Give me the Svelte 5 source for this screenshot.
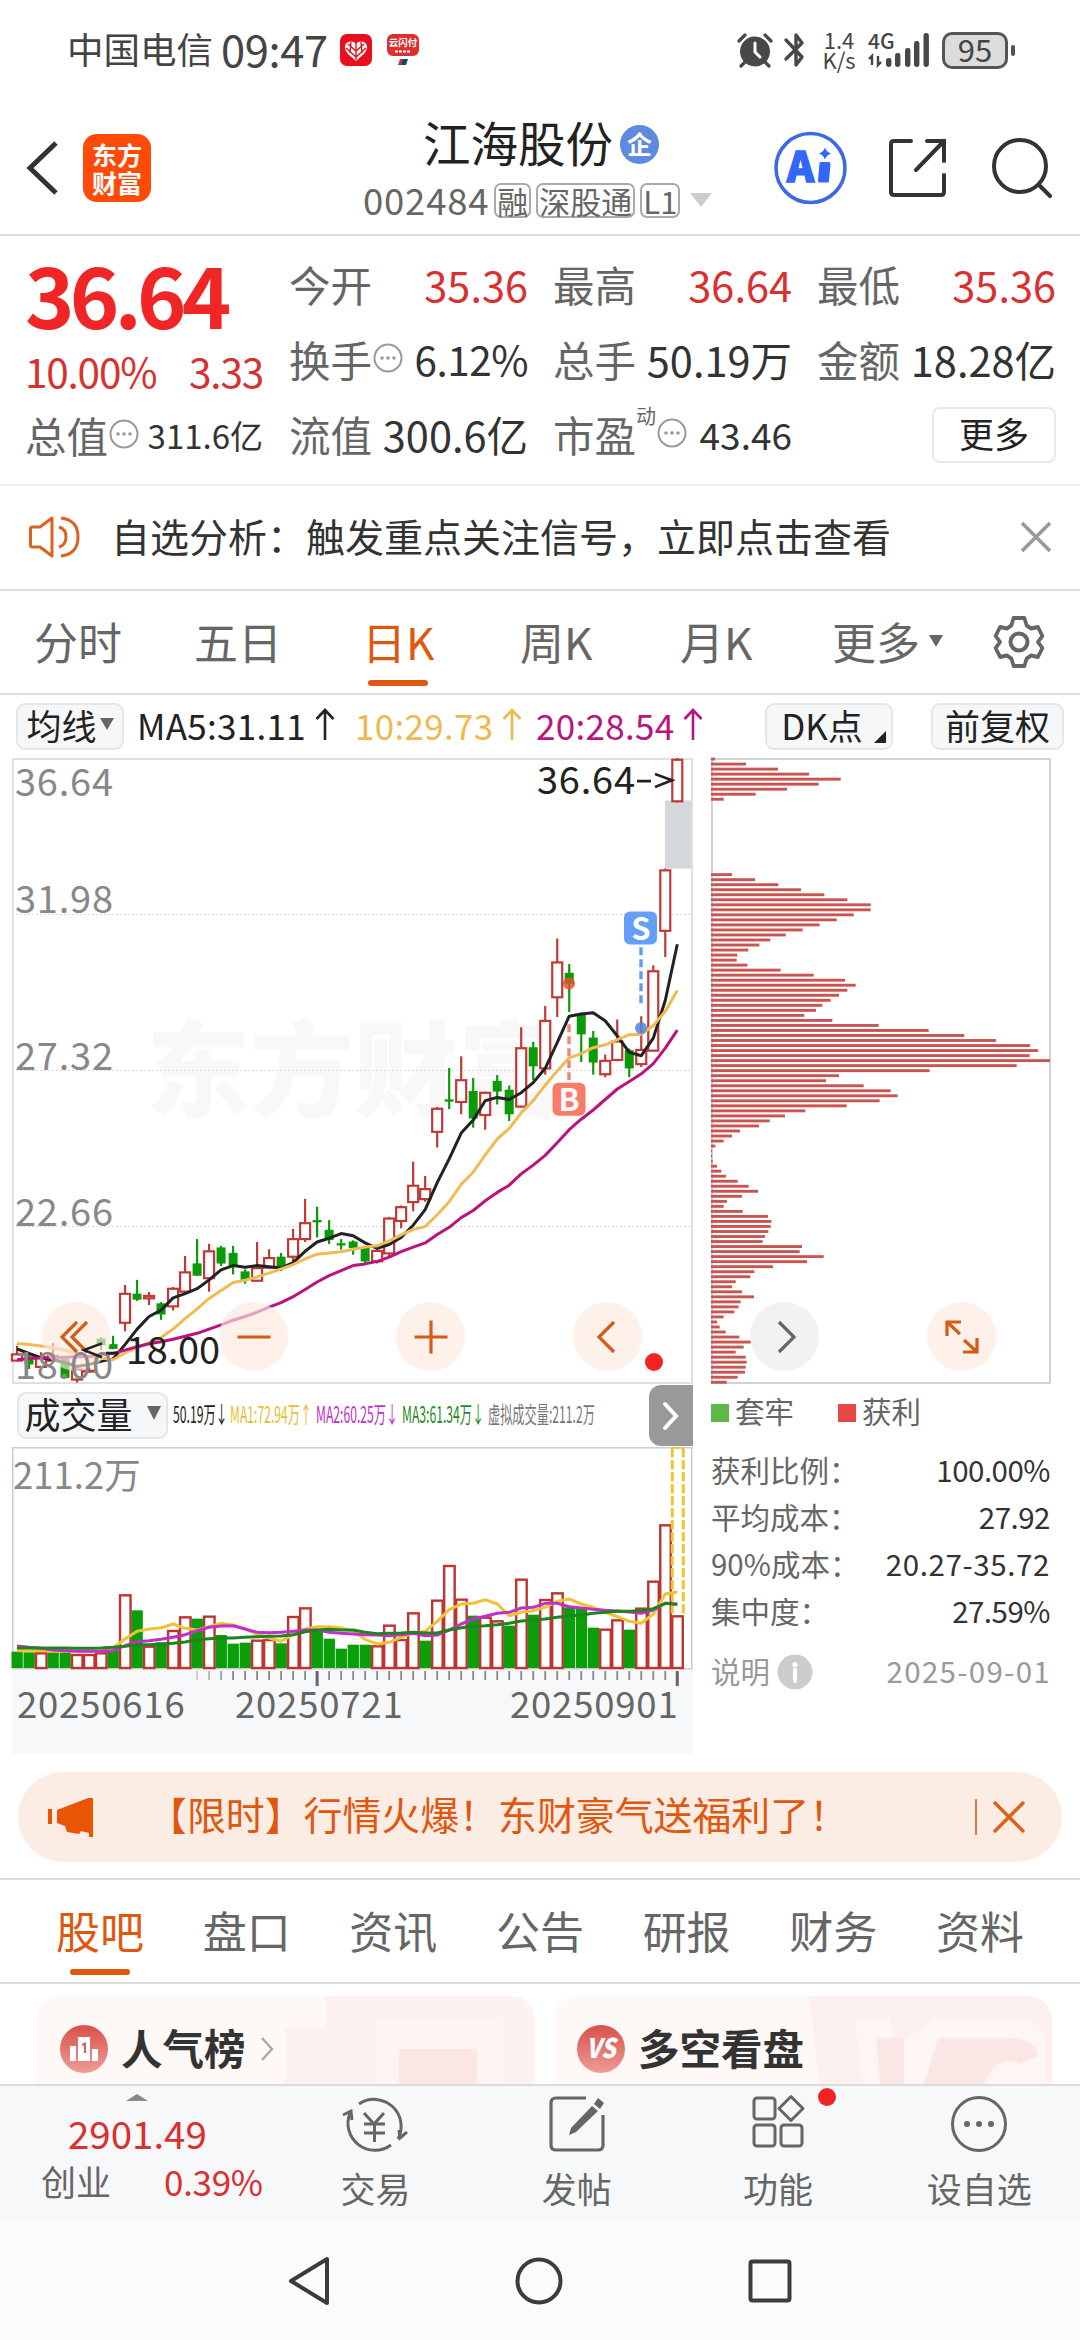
<script lang="ts">
  interface Candle {
    up: boolean;
    top: number;
    bottom: number;
    high: number;
    low: number;
  }

  const STEP = 12.005;
  const FIRST = 5;

  // direction, body top, body bottom, high, low
  const rawCandles: [number, number, number, number, number][] = [
    [1, 1459, 1475, 1440, 1475], [0, 1466, 1483, 1460, 1495], [1, 1466, 1490, 1455, 1495],
    [1, 1462, 1475, 1433, 1480], [0, 1472, 1515, 1472, 1518], [1, 1495, 1520, 1490, 1527],
    [1, 1498, 1501, 1480, 1503], [0, 1424, 1437, 1420, 1450], [0, 1437, 1446, 1416, 1448],
    [1, 1315, 1385, 1295, 1405], [0, 1317, 1329, 1283, 1333], [1, 1320, 1327, 1312, 1343],
    [0, 1340, 1364, 1336, 1378], [1, 1303, 1346, 1300, 1356], [1, 1264, 1311, 1226, 1313],
    [0, 1245, 1272, 1186, 1273], [1, 1214, 1279, 1197, 1311], [0, 1207, 1243, 1202, 1250],
    [0, 1220, 1250, 1202, 1270], [0, 1264, 1282, 1258, 1292], [1, 1254, 1285, 1193, 1287],
    [1, 1230, 1254, 1210, 1256], [0, 1229, 1254, 1219, 1262], [1, 1185, 1228, 1162, 1240],
    [1, 1147, 1186, 1090, 1193], [0, 1142, 1145, 1109, 1182], [0, 1165, 1187, 1141, 1198],
    [0, 1197, 1200, 1186, 1211], [0, 1193, 1206, 1189, 1223], [0, 1208, 1238, 1205, 1243],
    [1, 1213, 1239, 1208, 1244], [1, 1136, 1220, 1133, 1226], [1, 1109, 1143, 1106, 1160],
    [1, 1058, 1098, 1002, 1120], [1, 1066, 1091, 1036, 1097], [1, 875, 931, 872, 968],
    [0, 855, 858, 779, 877], [1, 807, 860, 751, 889], [0, 835, 898, 803, 921],
    [1, 837, 891, 835, 926], [0, 811, 834, 796, 866], [0, 832, 888, 821, 905],
    [1, 731, 871, 682, 873], [0, 731, 774, 717, 808], [1, 666, 780, 632, 795],
    [1, 527, 611, 471, 658], [0, 554, 578, 532, 646], [0, 652, 698, 648, 765],
    [0, 708, 765, 691, 795], [1, 761, 794, 747, 801], [1, 715, 760, 664, 763],
    [0, 738, 779, 733, 801], [1, 735, 770, 656, 777], [1, 548, 738, 535, 740],
    [1, 308, 453, 305, 515], [1, 45, 145, 42, 147]
  ];

  const ma5 = [
    1447, 1458, 1468, 1473, 1480, 1489, 1484, 1477, 1471, 1437, 1400, 1370, 1355, 1326, 1316, 1304,
    1283, 1259, 1249, 1253, 1249, 1252, 1255, 1242, 1215, 1193, 1184, 1173, 1178, 1195, 1208, 1199,
    1182, 1153, 1116, 1052, 995, 934, 903, 857, 849, 854, 838, 814, 780, 719, 656, 651, 648, 667,
    703, 742, 750, 708, 618, 485
  ];
  const ma10 = [
    1434, 1437, 1440, 1445, 1451, 1458, 1465, 1469, 1473, 1457, 1444, 1433, 1420, 1400, 1375, 1352,
    1327, 1308, 1289, 1284, 1276, 1267, 1257, 1247, 1233, 1222, 1219, 1216, 1210, 1205, 1202, 1190,
    1176, 1163, 1156, 1128, 1097, 1056, 1027, 986, 948, 923, 886, 857, 820, 786, 755, 745, 731, 724,
    712, 700, 699, 678, 644, 595
  ];
  const ma20 = [
    1473, 1470, 1469, 1468, 1467, 1466, 1465, 1461, 1458, 1450, 1442, 1435, 1430, 1424, 1417, 1410,
    1400, 1390, 1379, 1370, 1360, 1348, 1337, 1323, 1306, 1288, 1273, 1261, 1249, 1245, 1239, 1229,
    1216, 1205, 1195, 1175, 1158, 1135, 1118, 1095, 1075, 1058, 1031, 1010, 987, 957, 926, 901, 879,
    854, 829, 811, 793, 769, 732, 689
  ];

  const volumes = [
    813, 815, 815, 815, 815, 820, 820, 815, 808, 641, 689, 795, 785, 748, 707, 714, 705, 763, 789,
    786, 777, 775, 788, 706, 680, 745, 774, 804, 792, 792, 794, 732, 775, 695, 780, 657, 553, 654,
    705, 708, 719, 735, 594, 702, 655, 635, 680, 685, 741, 744, 716, 747, 681, 600, 431, 704
  ];
  // one digit per volume bar, 1 = rising
  const volumeUp = '00100111010101101000110110000011110111011010110001101111';
  const vol5 = [
    810, 810, 810, 812, 812, 812, 812, 810, 802, 775, 752, 745, 741, 730, 743, 748, 738, 728, 733,
    745, 760, 772, 782, 762, 745, 738, 738, 742, 752, 776, 790, 785, 770, 757, 752, 722, 687, 670,
    668, 657, 670, 705, 695, 690, 680, 662, 655, 670, 680, 695, 708, 722, 728, 700, 640, 634
  ];
  const vol10 = [
    796, 800, 803, 808, 810, 812, 812, 812, 810, 795, 783, 780, 776, 770, 762, 750, 740, 736, 735,
    745, 755, 756, 755, 752, 748, 748, 755, 758, 760, 762, 763, 765, 762, 758, 765, 763, 748, 730,
    715, 707, 698, 695, 682, 680, 668, 668, 678, 682, 686, 689, 691, 694, 698, 688, 668, 671
  ];
  const vol20 = [
    802, 802, 802, 802, 802, 803, 803, 802, 800, 797, 792, 792, 790, 788, 784, 777, 774, 772, 772,
    770, 768, 767, 766, 762, 753, 748, 746, 748, 748, 755, 759, 758, 757, 755, 757, 757, 748, 741,
    737, 735, 732, 728, 721, 718, 715, 710, 706, 703, 698, 695, 692, 692, 690, 684, 668, 671
  ];

  const chips = [
    12, 105, 201, 294, 389, 323, 228, 134, 38, 0, 0, 0, 0, 0, 0, 0, 0, 0, 0, 0, 0, 0, 0, 63, 132,
    202, 270, 340, 409, 479, 479, 428, 377, 326, 275, 224, 178, 145, 112, 79, 77, 109, 209, 308,
    402, 434, 409, 384, 359, 334, 315, 280, 364, 503, 653, 760, 855, 957, 981, 956, 1017, 917, 656,
    384, 345, 458, 539, 560, 506, 407, 283, 222, 176, 144, 87, 63, 38, 13, 3, 3, 5, 18, 31, 45, 80,
    113, 141, 93, 48, 38, 95, 171, 181, 179, 172, 162, 155, 273, 266, 338, 288, 186, 130, 118, 74,
    63, 93, 129, 89, 83, 70, 38, 18, 26, 44, 85, 126, 98, 74, 104, 107, 104, 102, 80, 47
  ];

  const px = (i: number) => FIRST + i * STEP;
  const py = (v: number) => (v - 42) / 2.378;
  const vy = (v: number) => (v - 199) / 3;

  const candles: Candle[] = rawCandles.map(([up, top, bottom, high, low]) => ({
    up: up === 1,
    top: py(top),
    bottom: py(bottom),
    high: py(high),
    low: py(low)
  }));

  const line = (values: number[], fy: (v: number) => number) =>
    values.map((v, i) => `${px(i).toFixed(1)},${fy(v).toFixed(1)}`).join(' ');

  const axis = [
    { text: '36.64', y: 132 },
    { text: '31.98', y: 411 },
    { text: '27.32', y: 785 },
    { text: '22.66', y: 1156 },
    { text: '18.00', y: 1518 }
  ];

  const periods = ['分时', '五日', '日K', '周K', '月K'];
  const sections = ['股吧', '盘口', '资讯', '公告', '研报', '财务', '资料'];
  const chipStats = [
    ['获利比例：', '100.00%'],
    ['平均成本：', '27.92'],
    ['90%成本：', '20.27-35.72'],
    ['集中度：', '27.59%']
  ];
  const volumeLegend = [
    { text: '50.19万↓', x: 0, color: '#222' },
    { text: 'MA1:72.94万↑', x: 57, color: '#e9bd2e' },
    { text: 'MA2:60.25万↓', x: 143, color: '#c22fc9' },
    { text: 'MA3:61.34万↓', x: 229, color: '#1f8a1f' },
    { text: '虚拟成交量:211.2万', x: 315, color: '#777' }
  ];

  let period = $state('日K');
  let section = $state('股吧');
</script>

{#snippet dots()}
  <svg class="dots" width="30" height="30" viewBox="0 0 30 30">
    <circle cx="15" cy="15" r="13.5" fill="none" stroke="#999" stroke-width="2" />
    <g fill="#999"><circle cx="9" cy="15" r="1.8" /><circle cx="15" cy="15" r="1.8" /><circle cx="21" cy="15" r="1.8" /></g>
  </svg>
{/snippet}

{#snippet arrow()}
  <svg class="arrow" width="20" height="34" viewBox="0 0 20 34" fill="none" stroke="currentColor" stroke-width="2.6">
    <path d="M10 33V3M1.5 12L10 3l8.5 9" />
  </svg>
{/snippet}

<div class="screen">
  <div class="status">
    <span class="carrier">中国电信</span>
    <span class="clock">09:47</span>
    <svg class="app-a" width="32" height="32" viewBox="0 0 32 32">
      <rect width="32" height="32" rx="7" fill="#e8101c" />
      <path d="M16 27C9 21 4 17 5 12c1-5 8-6 11-2 3-4 10-3 11 2 1 5-4 9-11 15z" fill="#fff" />
      <path d="M16 9v17M8 10l8 7 8-7M6 14l10 9 10-9M11 8l-1 11M21 8l1 11" stroke="#e8101c" stroke-width="1.4" fill="none" />
    </svg>
    <svg class="app-b" width="32" height="32" viewBox="0 0 32 32">
      <rect width="32" height="22" rx="6" fill="#dc3030" />
      <text x="16" y="12" text-anchor="middle" font-size="9.5" font-weight="700" fill="#fff">云闪付</text>
      <path d="M8 17.5h16" stroke="#fff" stroke-width="2" stroke-dasharray="3 1" />
      <path d="M13 25h5l-2 6h-5z" fill="#c33" /><path d="M16 25h5l-2 6h-5z" fill="#0b4a70" />
    </svg>
    <div class="status-right">
      <svg width="36" height="36" viewBox="0 0 36 36">
        <circle cx="18" cy="19.5" r="15" fill="#484848" />
        <path d="M2 9l6-6M34 9l-6-6M8 30l-4 4M28 30l4 4" stroke="#484848" stroke-width="3.2" stroke-linecap="round" />
        <path d="M18 11v9l5 5" stroke="#fff" stroke-width="3" fill="none" stroke-linecap="round" stroke-linejoin="round" />
      </svg>
      <svg class="bt" width="24" height="36" viewBox="0 0 24 36" fill="none" stroke="#484848" stroke-width="3.4" stroke-linecap="round" stroke-linejoin="round">
        <path d="M3 8l16 17-6 8V3l6 8L3 27" />
      </svg>
      <div class="speed"><span>1.4</span><span>K/s</span></div>
      <svg class="signal" width="64" height="36" viewBox="0 0 64 36">
        <text x="1" y="17" font-size="21" font-weight="500" fill="#444">4G</text>
        <path d="M5 33V24l-3 3M11 24v9l3-3" stroke="#444" stroke-width="2.4" fill="none" />
        <g fill="#484848"><rect x="19" y="26" width="5.4" height="9" rx="2.4" /><rect x="28" y="21" width="5.4" height="14" rx="2.4" /><rect x="38" y="16" width="5.4" height="19" rx="2.4" /><rect x="47" y="9" width="5.4" height="26" rx="2.4" /><rect x="56.5" y="1" width="5.4" height="34" rx="2.4" /></g>
      </svg>
      <span class="battery">95</span>
      <i class="nub"></i>
    </div>
  </div>

  <header>
    <svg class="back" width="34" height="56" viewBox="0 0 34 56" fill="none" stroke="#333" stroke-width="5">
      <path d="M31 3L5 28l26 25" />
    </svg>
    <div class="logo"><span>东方</span><span>财富</span></div>
    <div class="title">
      <div class="name">江海股份<span class="badge">企</span></div>
      <div class="code">
        002484
        <span class="tag">融</span><span class="tag">深股通</span><span class="tag">L1</span>
        <i class="caret-light"></i>
      </div>
    </div>
    <div class="actions">
      <svg width="73" height="74" viewBox="0 0 73 74">
        <circle cx="36.5" cy="37" r="34.5" fill="none" stroke="#3f69e3" stroke-width="3.6" />
        <text x="13" y="51" font-size="41" font-weight="900" fill="#3566fa" stroke="#3566fa" stroke-width="1.5">A</text>
        <path d="M47 32.5h8l-1.5 17.5h-8z" fill="#3566fa" stroke="#3566fa" stroke-width="3" stroke-linejoin="round" />
        <path d="M51 16.5q1.5 4.5 6 6q-4.5 1.5-6 6q-1.5-4.5-6-6q4.5-1.5 6-6z" fill="#3566fa" />
      </svg>
      <svg class="share" width="60" height="60" viewBox="0 0 60 60" fill="none" stroke="#333" stroke-width="4" stroke-linecap="round">
        <path d="M23 3H6q-3 0-3 3v48q0 3 3 3h47q3 0 3-3V37M39 3h17v20M56 3L28 32" />
      </svg>
      <svg class="search" width="62" height="62" viewBox="0 0 62 62" fill="none" stroke="#333" stroke-width="4" stroke-linecap="round">
        <circle cx="29" cy="29" r="26" /><path d="M48 48l11 11" />
      </svg>
    </div>
  </header>

  <section class="quote">
    <div class="main-price">
      <div class="price">36.64</div>
      <div class="change"><span>10.00%</span><span>3.33</span></div>
      <div class="cell"><span class="label">总值</span>{@render dots()}<b class="small">311.6亿</b></div>
    </div>
    <div class="cells">
      <div class="cell"><span class="label">今开</span><b class="red">35.36</b></div>
      <div class="cell"><span class="label">最高</span><b class="red">36.64</b></div>
      <div class="cell"><span class="label">最低</span><b class="red">35.36</b></div>
      <div class="cell"><span class="label">换手</span>{@render dots()}<b class="pct">6.12%</b></div>
      <div class="cell"><span class="label">总手</span><b>50.19万</b></div>
      <div class="cell"><span class="label">金额</span><b>18.28亿</b></div>
      <div class="cell"><span class="label">流值</span><b>300.6亿</b></div>
      <div class="cell"><span class="label">市盈</span><sup>动</sup>{@render dots()}<b class="pe">43.46</b></div>
      <div class="cell"><button class="more">更多</button></div>
    </div>
  </section>

  <div class="notice">
    <svg width="52" height="44" viewBox="0 0 52 44" fill="none" stroke="#d9641f" stroke-width="3">
      <path d="M3 12q-1.5 0-1.5 2v16q0 2 1.5 2h8l12 9V3L11 12z" stroke-linejoin="round" />
      <path d="M30 12q7 2 7 10t-7 10M32 3q17 2 17 19T32 41" />
    </svg>
    <p>自选分析：触发重点关注信号，立即点击查看</p>
    <svg width="32" height="32" viewBox="0 0 32 32" stroke="#999" stroke-width="3.6"><path d="M2 2l28 28M30 2L2 30" /></svg>
  </div>

  <nav class="periods">
    {#each periods as p}
      <button class:active={p === period} onclick={() => (period = p)}>{p}</button>
    {/each}
    <button>更多<i class="caret"></i></button>
    <svg width="54" height="54" viewBox="0 0 54 54" fill="none" stroke="#666" stroke-width="4" stroke-linejoin="round">
      <path d="M21 3h12l2.5 7.5 5 3L48 12l5 9-5 6 5 6-5 9-7.5-1.5-5 3L33 51H21l-2.5-7.5-5-3L6 42l-5-9 5-6-5-6 5-9 7.5 1.5 5-3z" transform="translate(2.7 0) scale(.9 1)" />
      <circle cx="27" cy="27" r="8.5" />
    </svg>
  </nav>

  <div class="ma-bar">
    <button class="chip-btn ma-btn">均线<i class="caret"></i></button>
    <span class="ma black">MA5:31.11{@render arrow()}</span>
    <span class="ma yellow">10:29.73{@render arrow()}</span>
    <span class="ma purple">20:28.54{@render arrow()}</span>
    <button class="chip-btn dk">DK点<i class="corner"></i></button>
    <button class="chip-btn adj">前复权</button>
  </div>

  <main>
    <div class="left">
      <svg class="kline" width="681" height="626" viewBox="0 0 681 626">
        <text x="134" y="351" font-size="104" font-weight="900" fill="#f8f8f8">东方财富</text>
        <g stroke="#d8d8d8" stroke-dasharray="2 2">
          {#each [414, 785, 1156] as g}
            <path d="M0 {py(g)}H680" />
          {/each}
        </g>
        <rect x="1" y="1" width="679" height="624" fill="none" stroke="#e0e0e0" stroke-width="2" />
        <rect x="653" y={py(143)} width="26" height={py(305) - py(143)} fill="#d4d7dc" />
        {#each candles as c, i}
          {#if c.up}
            <path d="M{px(i)} {c.high}V{c.top}M{px(i)} {c.bottom}V{c.low}" stroke="#bf3a37" stroke-width="2.2" />
            <rect x={px(i) - 5} y={c.top + 0.5} width="10" height={c.bottom - c.top - 0.5} fill="#fff" stroke="#bf3a37" stroke-width="2.2" />
          {:else}
            <path d="M{px(i)} {c.high}V{c.low}" stroke="#0a9a0a" stroke-width="2.2" />
            <rect x={px(i) - 4.5} y={c.top - 0.5} width="9" height={c.bottom - c.top + 1} fill="#0a9a0a" />
          {/if}
        {/each}
        <g fill="none" stroke-width="3" stroke-linejoin="round">
          <polyline points={line(ma5, py)} stroke="#222" />
          <polyline points={line(ma10, py)} stroke="#efbb55" />
          <polyline points={line(ma20, py)} stroke="#b9147c" />
        </g>
        <g class="signal-mark">
          <path d="M557 {py(675)}V{py(808)}" stroke="#f58473" stroke-width="3.4" stroke-dasharray="8 4" />
          <circle cx="557" cy={py(578)} r="6" fill="#e5502e" opacity=".85" />
          <rect x="540.5" y={py(814)} width="33" height="33" rx="6" fill="#fa7b69" />
          <text x="557" y={py(882)} text-anchor="middle">B</text>
          <path d="M629 {py(492)}V{py(626)}" stroke="#5e9cf0" stroke-width="3.4" stroke-dasharray="8 4" />
          <circle cx="629" cy={py(684)} r="6" fill="#4c85e0" opacity=".85" />
          <rect x="612" y={py(407)} width="33" height="33" rx="6" fill="#639ff7" />
          <text x="629" y={py(475)} text-anchor="middle">S</text>
        </g>
      </svg>
      <svg class="kline-text" width="681" height="626" viewBox="0 0 681 626">
        {#each axis as a}
          <text x="3" y={py(a.y)} font-size="38" fill="#888" textLength="98">{a.text}</text>
        {/each}
        <path d="M90 {py(1434)}L72 {py(1450)}L90 {py(1467)}M94 {py(1457)}h12" fill="none" stroke="#222" stroke-width="2.6" />
        <text x="114" y={py(1484)} font-size="38" fill="#222" textLength="94">18.00</text>
        <text x="525" y={py(127)} font-size="38" fill="#222" textLength="98">36.64</text>
        <path d="M625 {py(97)}h14M643 {py(80)}L660 {py(95)}L643 {py(111)}" fill="none" stroke="#222" stroke-width="2.6" />
      </svg>

      <div class="vol-bar">
        <button class="chip-btn vol-btn">成交量<i class="caret"></i></button>
        <svg width="424" height="40" viewBox="0 0 424 40">
          {#each volumeLegend as l}
            <text transform="translate({l.x} 27) scale(.53 1)" font-size="23" fill={l.color}>{l.text}</text>
          {/each}
        </svg>
        <span class="expand">
          <svg width="20" height="32" viewBox="0 0 20 32" fill="none" stroke="#fff" stroke-width="4" stroke-linecap="round"><path d="M4 4l11 12L4 28" /></svg>
        </span>
      </div>

      <svg class="volume" width="681" height="223" viewBox="0 0 681 223">
        <rect x=".75" y=".75" width="679" height="221" fill="#fff" stroke="#ccc" stroke-width="1.5" />
        <text x="1" y="42" font-size="36.5" fill="#888">211.2万</text>
        {#each volumes as v, i}
          {#if volumeUp[i] === '1'}
            <rect x={px(i) - 5} y={vy(v) + 1} width="10.5" height={220 - vy(v)} fill="#fff" stroke="#bd3431" stroke-width="2.4" />
          {:else}
            <rect x={px(i) - 5.5} y={vy(v)} width="11.3" height={221 - vy(v)} fill="#0a9e0a" />
          {/if}
        {/each}
        <path d="M{px(55) - 5} 1V167M{px(55) + 6} 1V167" stroke="#edc433" stroke-width="3" stroke-dasharray="9.5 2.5" />
        <path d="M{px(55) - 5} 1h11" stroke="#edc433" stroke-width="1.5" />
        <g fill="none" stroke-width="3" stroke-linejoin="round">
          <polyline points={line(vol5, vy)} stroke="#edc433" />
          <polyline points={line(vol10, vy)} stroke="#c22fc9" />
          <polyline points={line(vol20, vy)} stroke="#1f8420" />
        </g>
      </svg>

      <div class="dates">
        <svg width="681" height="18" viewBox="0 0 681 18">
          {#each volumes as _, i}
            {#if i === 25 || i === 55}
              <path d="M{px(i)} 1V16" stroke="#666" stroke-width="3" />
            {:else if i >= 15}
              <path d="M{px(i)} 1V10" stroke="#888" stroke-width="1.8" opacity={Math.min(1, (i - 13) / 5)} />
            {/if}
          {/each}
        </svg>
        <div class="date-labels"><span>20250616</span><span>20250721</span><span>20250901</span></div>
      </div>
    </div>

    <div class="right">
      <svg class="chips" width="341" height="626" viewBox="0 0 341 626">
        <rect x="1" y="1" width="338" height="624" fill="none" stroke="#ccc" stroke-width="1.8" />
        {#each chips as w, i}
          {#if w}
            <rect x="0" y={i * 5.026 - 0.4} width={w / 3} height="2.9" fill="#c95552" />
          {/if}
        {/each}
      </svg>
      <div class="legend">
        <i class="sq green"></i><span>套牢</span><i class="sq redsq"></i><span>获利</span>
      </div>
      <dl>
        {#each chipStats as [k, v]}
          <div><dt>{k}</dt><dd class:range={v.includes('-')}>{v}</dd></div>
        {/each}
      </dl>
      <div class="explain">
        <span>说明</span>
        <svg width="36" height="36" viewBox="0 0 36 36"><circle cx="18" cy="18" r="17.5" fill="#ccc" /><circle cx="18" cy="10.5" r="2.6" fill="#fff" /><path d="M18 15.5V27" stroke="#fff" stroke-width="4" stroke-linecap="round" /></svg>
        <time>2025-09-01</time>
      </div>
    </div>

    <!-- floating chart controls -->
    <div class="controls">
      <button><svg width="36" height="36" viewBox="0 0 36 36"><path d="M18 3L3 18l15 15M28 3L13 18l15 15" /></svg></button>
      <button><svg width="36" height="36" viewBox="0 0 36 36"><path d="M1.5 18h33" /></svg></button>
      <button><svg width="36" height="36" viewBox="0 0 36 36"><path d="M1.5 18h33M18 1.5v33" /></svg></button>
      <button class="has-dot"><svg width="36" height="36" viewBox="0 0 36 36"><path d="M24 3L9 18l15 15" /></svg></button>
      <button class="grey"><svg width="36" height="36" viewBox="0 0 36 36"><path d="M12 3l15 15-15 15" /></svg></button>
      <button><svg width="36" height="36" viewBox="0 0 36 36"><path d="M3 17V3h14M3 3l13 12M33 19v14H19M33 33L20 21" /></svg></button>
    </div>
  </main>

  <div class="banner">
    <svg width="46" height="40" viewBox="0 0 46 40" fill="#ea5504">
      <rect x="0" y="12" width="4" height="15" /><path d="M9 13L40 1h5v39h-4v-4l-8-2-2 3-12-2-2-6-8-3z" />
    </svg>
    <p>【限时】行情火爆！东财豪气送福利了！</p>
    <i class="bar"></i>
    <svg width="34" height="34" viewBox="0 0 34 34" stroke="#e0601a" stroke-width="3.4"><path d="M2 2l30 30M32 2L2 32" /></svg>
  </div>

  <nav class="sections">
    {#each sections as s}
      <button class:active={s === section} onclick={() => (section = s)}>{s}</button>
    {/each}
  </nav>

  <div class="cards">
    <div class="card">
      <svg class="deco" width="250" height="88" viewBox="0 0 250 88">
        <path d="M40 0H250V88H0V31H40z" fill="#fdf2f0" /><path d="M92 24H213V88H92z" fill="#fef5f3" /><path d="M114 53H192V88H114z" fill="#fbe6e4" />
      </svg>
      <svg class="round" width="48" height="48" viewBox="0 0 48 48">
        <defs><linearGradient id="g1" x2="0" y2="1"><stop stop-color="#d9504a" /><stop offset="1" stop-color="#ee9c98" /></linearGradient></defs>
        <circle cx="24" cy="24" r="24" fill="url(#g1)" />
        <path d="M10 21h6v15h-6zM18 12h12v24H18zM32 24h6v12h-6z" fill="#fff" />
        <path d="M22 20l3-1.5V28" stroke="#d9615c" stroke-width="2" fill="none" />
      </svg>
      <b>人气榜</b>
      <svg width="14" height="24" viewBox="0 0 14 24" fill="none" stroke="#aaa" stroke-width="2.5"><path d="M2 1l10 11L2 23" /></svg>
    </div>
    <div class="card">
      <svg class="deco" width="250" height="88" viewBox="0 0 250 88">
        <path d="M7 0H250V88H17z" fill="#fdf1ef" /><path d="M52 22h36l5 30 40-30h75q30 0 36 22v44H62z" fill="#fef6f4" /><path d="M74 42h28v46H78zM122 88l14-46h72q25 0 28 18l-18 8q-22-12-36 20z" fill="#fbe8e6" />
      </svg>
      <svg class="round" width="48" height="48" viewBox="0 0 48 48">
        <circle cx="24" cy="24" r="24" fill="url(#g1)" />
        <text transform="translate(24 33) scale(.86 1)" text-anchor="middle" font-size="27" font-weight="900" font-style="italic" fill="#fff">VS</text>
      </svg>
      <b>多空看盘</b>
    </div>
  </div>

  <footer>
    <div class="index">
      <i class="caret-up"></i>
      <div class="idx">2901.49</div>
      <div class="idx-row"><span>创业</span><em>0.39%</em></div>
    </div>
    <div class="tool">
      <svg width="66" height="58" viewBox="0 0 66 58" fill="none" stroke="#666" stroke-width="3">
        <path d="M17 9A27 27 0 0 1 56 44M49 50A27 27 0 0 1 8 18M1 20l8-4 1 9M65 37l-7 6-1-8M22 18l10 11 10-11M22 29h21M22 38h21M32.5 29v18" />
      </svg>
      <span>交易</span>
    </div>
    <div class="tool">
      <svg width="58" height="58" viewBox="0 0 58 58" fill="none" stroke="#666" stroke-width="3.2">
        <path d="M38 3H8Q3 3 3 8v42q0 5 5 5h42q5 0 5-5V20" />
        <path d="M50 3l6 5-4 6-6-5zM44 11l6 5-22 21-7 3 2-7z" fill="#666" stroke="none" />
      </svg>
      <span>发帖</span>
    </div>
    <div class="tool has-dot">
      <svg width="54" height="54" viewBox="0 0 54 54" fill="none" stroke="#666" stroke-width="3">
        <rect x="3" y="3" width="21" height="21" rx="3" /><rect x="3" y="30" width="21" height="21" rx="3" /><rect x="30" y="30" width="21" height="21" rx="3" />
        <path d="M40 1.5l12 12-12 12-12-12z" stroke-linejoin="round" />
      </svg>
      <span>功能</span>
    </div>
    <div class="tool">
      <svg width="58" height="58" viewBox="0 0 58 58"><circle cx="29" cy="29" r="26.5" fill="none" stroke="#666" stroke-width="3" /><g fill="#666"><circle cx="17" cy="29" r="3" /><circle cx="29" cy="29" r="3" /><circle cx="41" cy="29" r="3" /></g></svg>
      <span>设自选</span>
    </div>
  </footer>

  <div class="sysnav">
    <svg width="44" height="50" viewBox="0 0 44 50" fill="none" stroke="#3c3c3c" stroke-width="4" stroke-linejoin="round"><path d="M40 3v44L4 25z" /></svg>
    <svg width="50" height="50" viewBox="0 0 50 50" fill="none" stroke="#3c3c3c" stroke-width="4"><circle cx="25" cy="25" r="21.5" /></svg>
    <svg width="46" height="46" viewBox="0 0 46 46" fill="none" stroke="#3c3c3c" stroke-width="4"><rect x="3.5" y="3.5" width="39" height="39" rx="2" /></svg>
  </div>
</div>

<style>
  :global(body) {
    margin: 0;
    background: #fff;
  }

  .screen {
    width: 1080px;
    height: 2340px;
    overflow: hidden;
    display: flex;
    flex-direction: column;
    background: #fff;
    color: #333;
    font-family: 'Noto Sans CJK SC', sans-serif;
    line-height: 1;
    white-space: nowrap;
  }

  .screen > * {
    flex: none;
    box-sizing: border-box;
  }

  svg {
    display: block;
    flex: none;
    overflow: visible;
  }

  button {
    padding: 0;
    border: none;
    background: none;
    font: inherit;
    color: inherit;
  }

  p,
  dl,
  dd {
    margin: 0;
  }

  .status {
    height: 100px;
    display: flex;
    align-items: center;
    padding: 0 65px 0 67px;
    color: #444;
  }

  .carrier {
    font-size: 36.5px;
    padding-bottom: 2px;
  }

  .clock {
    margin-left: 8px;
    padding-bottom: 2px;
    font-size: 43.5px;
    letter-spacing: -0.4px;
  }

  .app-a {
    margin-left: 12px;
  }

  .app-b {
    margin-left: 15px;
  }

  .status-right {
    margin-left: auto;
    display: flex;
    align-items: center;
  }

  .bt {
    margin-left: 10px;
  }

  .speed {
    margin-left: 14px;
    width: 36px;
    display: flex;
    flex-direction: column;
    align-items: center;
    padding-bottom: 2px;
    font-size: 22px;
    line-height: 20px;
  }

  .signal {
    margin-left: 10px;
  }

  .battery {
    margin-left: 11px;
    width: 60px;
    height: 31px;
    border: 3px solid #555;
    border-radius: 10px;
    background: #dcdcdc;
    font-size: 31px;
    line-height: 28px;
    text-align: center;
  }

  .nub {
    width: 4px;
    height: 11px;
    margin-left: 3px;
    border-radius: 2px;
    background: #555;
  }

  header {
    height: 136px;
    border-bottom: 2px solid #ddd;
    display: flex;
    align-items: flex-start;
    padding: 18px 27px 0 25px;
  }

  .back {
    margin-top: 22px;
  }

  .logo {
    width: 68px;
    height: 68px;
    margin: 16px 0 0 24px;
    border-radius: 14px;
    background: #ff4a08;
    color: #fff;
    font-size: 25px;
    font-weight: 700;
    display: flex;
    flex-direction: column;
    align-items: center;
    justify-content: center;
    gap: 3px;
  }

  .title {
    margin-left: 212px;
    width: 348px;
  }

  .name {
    display: flex;
    align-items: center;
    height: 48px;
    padding-left: 60px;
    font-size: 47.5px;
    color: #222;
  }

  .badge {
    margin: 5px 0 0 7px;
    width: 39px;
    height: 39px;
    border-radius: 50%;
    background: #5f8ae0;
    color: #fff;
    font-size: 25px;
    font-weight: 700;
    line-height: 37px;
    text-align: center;
  }

  .code {
    display: flex;
    align-items: center;
    height: 38px;
    margin-top: 15px;
    font-size: 36.5px;
    letter-spacing: 0.8px;
    color: #666;
  }

  .tag {
    margin-left: 5px;
    padding: 0 1px;
    border: 2px solid #aaa;
    border-radius: 7px;
    font-size: 31px;
    line-height: 31px;
    letter-spacing: 0;
  }

  .caret-light {
    margin-left: 10px;
    border: 11px solid transparent;
    border-top: 14px solid #ccc;
    border-bottom: 0;
  }

  .actions {
    margin-left: auto;
    display: flex;
    align-items: center;
    margin-top: 13px;
  }

  .share {
    margin-left: 41px;
  }

  .search {
    margin-left: 43px;
  }

  .quote {
    height: 250px;
    border-bottom: 2px solid #eee;
    display: flex;
    gap: 26px;
    padding: 0 24px 0 25px;
  }

  .main-price {
    width: 239px;
  }

  .price {
    height: 100px;
    padding-top: 15px;
    box-sizing: border-box;
    font-size: 84px;
    font-weight: 700;
    letter-spacing: -4.8px;
    color: #f02626;
  }

  .change {
    display: flex;
    justify-content: space-between;
    height: 62px;
    align-items: center;
    padding-top: 8px;
    box-sizing: border-box;
    font-size: 40.5px;
    letter-spacing: -1.2px;
    color: #d93030;
  }

  .cells {
    flex: 1;
    display: grid;
    grid-template-columns: 239px 239px 239px;
    grid-template-rows: 75px 75px 75px;
    column-gap: 25px;
    padding-top: 11px;
  }

  .cell {
    display: flex;
    align-items: center;
    height: 75px;
    font-size: 41.5px;
  }

  .cell b {
    margin-left: auto;
    font-weight: 400;
  }

  .cell .label {
    color: #666;
  }

  .cell .red {
    color: #d93030;
  }

  .cell .small {
    font-size: 33px;
  }

  .cell .pct {
    font-size: 40.5px;
    letter-spacing: -0.5px;
  }

  .cell .pe {
    font-size: 37px;
  }

  .dots {
    margin: -4px 0 0 1px;
  }

  sup {
    align-self: flex-start;
    margin-top: 9px;
    font-size: 20px;
    line-height: 20px;
    color: #666;
  }

  .more {
    box-sizing: border-box;
    width: 124px;
    height: 56px;
    margin-left: auto;
    padding-bottom: 5px;
    border: 2px solid #e8e9eb;
    border-radius: 8px;
    font-size: 35px;
    color: #222;
  }

  .notice {
    height: 105px;
    border-bottom: 2px solid #ddd;
    display: flex;
    align-items: center;
    padding: 0 28px 2px 29px;
  }

  .notice p {
    flex: 1;
    margin-left: 30px;
    padding-bottom: 3px;
    font-size: 39px;
  }

  .periods {
    height: 104px;
    border-bottom: 2px solid #ddd;
    display: grid;
    grid-template-columns: 160px 168px 158px 160px 152px 160px 54px;
    align-items: center;
    justify-items: start;
    padding-left: 34px;
    font-size: 44px;
    color: #666;
  }

  .periods button,
  .sections button {
    position: relative;
    height: 100%;
    display: flex;
    align-items: center;
    padding-bottom: 3px;
    box-sizing: border-box;
  }

  .periods .active,
  .sections .active {
    color: #e0570f;
  }

  .periods .active::after,
  .sections .active::after {
    content: '';
    position: absolute;
    left: calc(50% - 30px);
    bottom: 7px;
    width: 60px;
    height: 6px;
    border-radius: 3px;
    background: #e0570f;
  }

  .caret {
    display: inline-block;
    margin-left: 9px;
    border: 7px solid transparent;
    border-top: 12px solid #666;
    border-bottom: 0;
  }

  .ma-bar {
    height: 63px;
    display: flex;
    align-items: center;
    padding: 0 16px 0 16px;
  }

  .chip-btn {
    box-sizing: border-box;
    height: 47px;
    padding-bottom: 5px;
    border: 2px solid #e4e6ea;
    border-radius: 9px;
    background: #f6f7f9;
    font-size: 35px;
    color: #222;
    display: flex;
    align-items: center;
    justify-content: center;
  }

  .ma-btn {
    width: 108px;
  }

  .ma-btn .caret {
    margin-left: 3px;
  }

  .ma {
    display: flex;
    align-items: center;
    padding-bottom: 5px;
    font-size: 35px;
    letter-spacing: 0.3px;
  }

  .arrow {
    margin-left: 9px;
  }

  .black {
    margin-left: 13px;
    width: 218px;
    color: #222;
  }

  .yellow {
    width: 181px;
    color: #efb94e;
  }

  .purple {
    color: #b9147c;
  }

  .dk {
    position: relative;
    width: 128px;
    margin-left: auto;
    padding-right: 14px;
  }

  .corner {
    position: absolute;
    right: 5px;
    bottom: 5px;
    border-left: 12px solid transparent;
    border-bottom: 12px solid #222;
  }

  .adj {
    width: 133px;
    margin-left: 38px;
  }

  main {
    position: relative;
    height: 1014px;
    display: flex;
    padding-left: 12px;
  }

  .left {
    position: relative;
    width: 681px;
  }

  .kline-text {
    position: absolute;
    top: 0;
    left: 0;
    z-index: 2;
  }

  .signal-mark text {
    font-size: 31px;
    font-weight: 700;
    fill: #fff;
  }

  .vol-bar {
    height: 63px;
    display: flex;
    align-items: center;
  }

  .vol-btn {
    width: 151px;
    margin: 0 5px;
    font-size: 36px;
  }

  .vol-btn .caret {
    margin-left: 14px;
    border-width: 14px 7px 0;
  }

  .expand {
    width: 44px;
    height: 61px;
    margin-left: auto;
    border-radius: 12px 0 0 12px;
    background: #999;
    display: flex;
    align-items: center;
    justify-content: center;
  }

  .dates {
    height: 84px;
    background: #f7f8fa;
  }

  .date-labels {
    display: grid;
    grid-template-columns: 218px 275px 1fr;
    margin-top: -3px;
    padding: 0 0 0 5px;
    font-size: 36.5px;
    letter-spacing: 0.8px;
    color: #666;
  }

  .right {
    margin-left: 18px;
    width: 341px;
  }

  .legend {
    display: flex;
    align-items: center;
    height: 57px;
    font-size: 29.5px;
    color: #666;
  }

  .legend span {
    padding-bottom: 3px;
  }

  .sq {
    width: 18px;
    height: 18px;
    margin-right: 6px;
  }

  .green {
    background: #5cb947;
  }

  .redsq {
    margin-left: 44px;
    background: #e64848;
  }

  dl div {
    display: flex;
    justify-content: space-between;
    align-items: center;
    height: 47px;
    font-size: 29.5px;
  }

  dl {
    padding: 5px 2px 0 0;
  }

  dt {
    color: #666;
  }

  dd {
    font-size: 29.5px;
    letter-spacing: -0.5px;
  }

  .range {
    letter-spacing: 0.6px;
  }

  .explain {
    display: flex;
    align-items: center;
    height: 76px;
    font-size: 29.5px;
    color: #999;
  }

  .explain span,
  time {
    padding-bottom: 3px;
  }

  .explain svg {
    margin-left: 7px;
  }

  time {
    margin-left: auto;
    padding-right: 1px;
    letter-spacing: 1.3px;
  }

  .controls {
    position: absolute;
    left: 42px;
    top: 544px;
    display: flex;
    gap: 108px;
    z-index: 1;
  }

  .controls button {
    width: 69px;
    height: 69px;
    border-radius: 50%;
    background: rgba(253, 233, 222, 0.65);
    display: flex;
    align-items: center;
    justify-content: center;
  }

  .controls path {
    fill: none;
    stroke: #d65b17;
    stroke-width: 3.2;
  }

  .controls .grey {
    background: #f2f2f2;
  }

  .controls .grey path {
    stroke: #666;
  }

  .has-dot {
    position: relative;
  }

  .has-dot::after {
    content: '';
    position: absolute;
    width: 18px;
    height: 18px;
    border-radius: 50%;
    background: #f02424;
  }

  .controls .has-dot::after {
    left: 72px;
    top: 51px;
  }

  .banner {
    height: 90px;
    margin: 0 18px;
    padding: 0 36px 0 30px;
    border-radius: 45px;
    background: #fcede4;
    display: flex;
    align-items: center;
    color: #e0570f;
  }

  .banner p {
    flex: 1;
    margin-left: 54px;
    padding-bottom: 7px;
    font-size: 38.9px;
  }

  .bar {
    width: 2px;
    height: 36px;
    margin-right: 15px;
    background: #e2793f;
  }

  .sections {
    height: 106px;
    margin-top: 16px;
    border-top: 2px solid #ddd;
    border-bottom: 2px solid #ddd;
    display: flex;
    justify-content: space-between;
    padding: 0 56px;
    font-size: 44px;
    color: #666;
  }

  .cards {
    height: 100px;
    padding: 12px 28px 0 36px;
    display: flex;
    gap: 18px;
  }

  .card {
    position: relative;
    width: 499px;
    height: 88px;
    box-sizing: border-box;
    padding: 18px 0 0 24px;
    border-radius: 24px 24px 0 0;
    background: #fef8f6;
    overflow: hidden;
    display: flex;
    align-items: center;
    font-size: 41.5px;
  }

  .card b {
    position: relative;
    margin: 0 14px 0 13px;
    padding-bottom: 3px;
    font-weight: 700;
  }

  .deco {
    position: absolute;
    right: 0;
    top: 0;
  }

  .round {
    position: relative;
  }

  footer {
    height: 137px;
    border-top: 2px solid #d8dade;
    background: #f7f8fa;
    display: flex;
    color: #666;
    font-size: 35px;
  }

  .index {
    width: 275px;
    display: flex;
    flex-direction: column;
    align-items: center;
  }

  .caret-up {
    margin-top: 8px;
    border: 11px solid transparent;
    border-bottom: 7px solid #888;
    border-top: 0;
  }

  .idx {
    margin-top: 12px;
    font-size: 38.5px;
    color: #d93030;
  }

  .idx-row {
    align-self: stretch;
    display: flex;
    justify-content: space-between;
    margin: 11px 12px 0 41px;
  }

  em {
    font-style: normal;
    color: #d93030;
    letter-spacing: -0.3px;
  }

  .tool {
    width: 201.5px;
    height: 132px;
    display: flex;
    flex-direction: column;
    align-items: center;
    justify-content: space-between;
    padding: 9px 0 13px;
    box-sizing: border-box;
  }

  .tool.has-dot::after {
    left: 141px;
    top: 2px;
  }

  .tool span {
    line-height: 35px;
  }

  .sysnav {
    height: 120px;
    background: #fbfbfb;
    display: flex;
    align-items: center;
    padding-left: 287px;
    gap: 183px;
  }
</style>
